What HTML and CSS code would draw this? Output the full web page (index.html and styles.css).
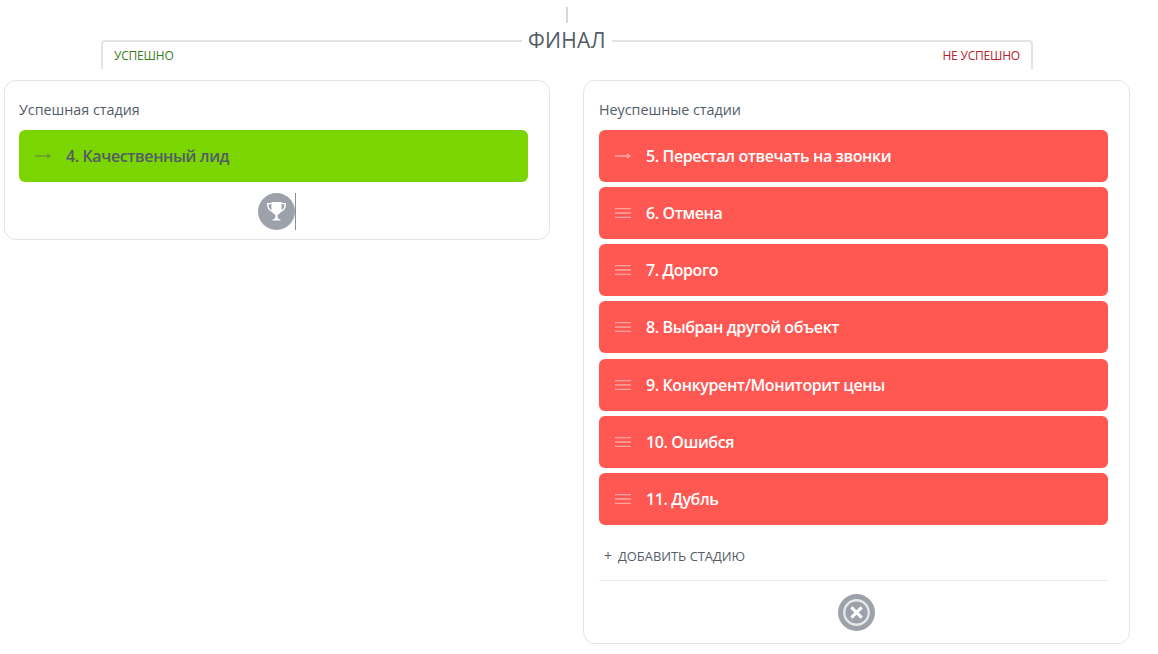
FILE: index.html
```html
<!DOCTYPE html>
<html lang="ru">
<head>
    <meta charset="UTF-8">
    <title>Финал</title>
    <link rel="stylesheet" href="styles.css">
</head>
<body>
    <div class="tick"></div>

    <!-- заголовок -->
    <div class="final-head">
        <span class="final-title">ФИНАЛ</span>
        <span class="side-label success">УСПЕШНО</span>
        <span class="side-label fail">НЕ УСПЕШНО</span>
    </div>

    <div class="columns">
        <!-- успешная -->
        <div class="card card-left">
            <div class="card-title">Успешная стадия</div>
            <div class="stage stage-green">
                <svg class="stage-icon" viewBox="0 0 16 10"><path d="M0 5h14M12 3l3 2-3 2" fill="none" stroke="currentColor" stroke-width="1.5"/></svg>
                <span>4. Качественный лид</span>
            </div>
            <div class="card-foot card-foot-first">
                <span class="round-icon">
                    <svg viewBox="0 0 24 24" width="27" height="27"><path d="M7.5 3.5h9v6.2c0 2.7-1.800 4.700-3.500 5.100v2.700c0 .8 2.500 1.200 3 2.500H8c.5-1.300 3-1.700 3-2.500v-2.700c-1.700-.4-3.500-2.400-3.500-5.100z" fill="#fff"/><path d="M7.500 5H4.200c0 3.500 1.300 5.800 4 6.800M16.500 5h3.300c0 3.500-1.300 5.800-4 6.800" fill="none" stroke="#fff" stroke-width="1.300"/></svg>
                </span>
                <span class="caret"></span>
            </div>
        </div>

        <!-- неуспешные -->
        <div class="card">
            <div class="card-title">Неуспешные стадии</div>
            <div class="stage stage-red">
                <svg class="stage-icon" viewBox="0 0 16 10"><path d="M0 5h14M12 3l3 2-3 2" fill="none" stroke="currentColor" stroke-width="1.5"/></svg>
                <span>5. Перестал отвечать на звонки</span>
            </div>
            <div class="stage stage-red">
                <svg class="stage-icon" viewBox="0 0 16 10"><path d="M0 .5h16M0 5h16M0 9.500h16" fill="none" stroke="currentColor" stroke-width="1.500"/></svg>
                <span>6. Отмена</span>
            </div>
            <div class="stage stage-red">
                <svg class="stage-icon" viewBox="0 0 16 10"><path d="M0 .5h16M0 5h16M0 9.500h16" fill="none" stroke="currentColor" stroke-width="1.500"/></svg>
                <span>7. Дорого</span>
            </div>
            <div class="stage stage-red">
                <svg class="stage-icon" viewBox="0 0 16 10"><path d="M0 .5h16M0 5h16M0 9.500h16" fill="none" stroke="currentColor" stroke-width="1.500"/></svg>
                <span>8. Выбран другой объект</span>
            </div>
            <div class="stage stage-red">
                <svg class="stage-icon" viewBox="0 0 16 10"><path d="M0 .5h16M0 5h16M0 9.500h16" fill="none" stroke="currentColor" stroke-width="1.500"/></svg>
                <span>9. Конкурент/Мониторит цены</span>
            </div>
            <div class="stage stage-red">
                <svg class="stage-icon" viewBox="0 0 16 10"><path d="M0 .5h16M0 5h16M0 9.500h16" fill="none" stroke="currentColor" stroke-width="1.500"/></svg>
                <span>10. Ошибся</span>
            </div>
            <div class="stage stage-red">
                <svg class="stage-icon" viewBox="0 0 16 10"><path d="M0 .5h16M0 5h16M0 9.500h16" fill="none" stroke="currentColor" stroke-width="1.500"/></svg>
                <span>11. Дубль</span>
            </div>
            <div class="add-stage"><span class="plus">+</span>ДОБАВИТЬ СТАДИЮ</div>
            <div class="card-foot card-foot-line">
                <span class="round-icon">
                    <svg viewBox="0 0 24 24" width="31" height="31"><circle cx="12" cy="12" r="9.500" fill="none" stroke="#e6e7ea" stroke-width="1.800"/><path d="M8 8l8 8M16 8l-8 8" fill="none" stroke="#fff" stroke-width="2.400"/></svg>
                </span>
            </div>
        </div>
    </div>
</body>
</html>
```

FILE: styles.css
```css
* {
    margin: 0;
    padding: 0;
    box-sizing: border-box;
}

body {
    background: #fff;
    font-family: 'Open Sans', sans-serif;
    color: #535c69;
    overflow: hidden;
}

.tick {
    width: 2px;
    height: 16px;
    margin: 7px 0 0 566px;
    background: #d5d7db;
}

/* заголовок */
.final-head {
    position: relative;
    display: flex;
    justify-content: space-between;
    width: 932px;
    height: 29px;
    margin: 17px 0 0 101px;
    padding: 5px 11px 0 11px;
    border: 2px solid #e1e3e5;
    border-bottom: 0;
    border-radius: 4px 4px 0 0;
}

.final-title {
    position: absolute;
    top: -15px;
    left: 419px;
    padding: 0 6px;
    background: #fff;
    font-size: 21px;
    line-height: 27px;
    font-weight: 500;
    letter-spacing: 0.3px;
    color: #535c69;
}

.side-label {
    font-size: 12px;
    line-height: 18px;
    font-weight: 500;
    letter-spacing: -0.2px;
}

.success { color: #3a7d1c; }
.fail { color: #b3242c; }

/* колонки */
.columns {
    display: grid;
    grid-template-columns: 546px 547px;
    gap: 33px;
    align-items: start;
    margin: 11px 0 0 4px;
}

.card {
    padding: 19px 21px 0 15px;
    border: 1px solid #e3e5e7;
    border-radius: 12px;
    background: #fff;
}

.card-left {
    padding-left: 14px;
}

.card-title {
    height: 29.7px;
    font-size: 14.3px;
    line-height: 20px;
    color: #535c69;
}

.stage {
    display: flex;
    align-items: center;
    height: 52px;
    margin-bottom: 5.25px;
    padding-left: 16px;
    border-radius: 6px;
    font-size: 16px;
    font-weight: 600;
    letter-spacing: -0.4px;
}

.stage-icon {
    width: 16px;
    height: 10px;
    margin-right: 15px;
    flex: none;
}

.stage-green {
    background: #7ad500;
    color: #535c69;
}

.stage-green .stage-icon { color: #6c9c30; }

.stage-red {
    background: #ff5752;
    color: #fff;
}

.stage-red .stage-icon { color: #ffa5a2; }

.add-stage {
    height: 50px;
    padding: 17px 0 0 5px;
    font-size: 12.9px;
    line-height: 18px;
    color: #535c69;
}

.plus {
    margin-right: 6px;
    font-size: 14px;
}

.card-foot {
    display: flex;
    justify-content: center;
    padding-left: 6px;
}

.card-foot-first {
    height: 46px;
    margin-top: 11px;
}

.card-foot-line {
    height: 63px;
    padding-top: 13px;
    border-top: 1px solid #e9eaec;
}

.round-icon {
    display: flex;
    align-items: center;
    justify-content: center;
    width: 37px;
    height: 37px;
    border-radius: 50%;
    background: #9da1aa;
}

.caret {
    width: 1px;
    height: 37px;
    background: #8a8e96;
}
```
